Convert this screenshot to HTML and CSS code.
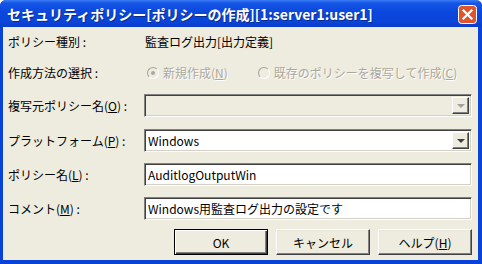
FILE: index.html
```html
<!DOCTYPE html>
<html lang="ja">
<head>
    <meta charset="UTF-8">
    <title>セキュリティポリシー</title>
    <link rel="stylesheet" href="styles.css">
</head>
<body>
    <div class="window">
        <div class="titlebar">
            <span class="title">セキュリティポリシー[ポリシーの作成][1:server1:user1]</span>
            <span class="close-btn">
                <svg width="19" height="19" viewBox="0 0 19 19">
                    <rect x="0.5" y="0.5" width="18" height="18" rx="3" fill="#e0542c" stroke="#fff"/>
                    <path d="M5.5 5.5 L13.5 13.5 M13.5 5.5 L5.5 13.5" stroke="#fff" stroke-width="2.2" stroke-linecap="square"/>
                </svg>
            </span>
        </div>

        <div class="content">
            <div class="row row-type">
                <span class="label">ポリシー種別 :</span>
                <span class="value">監査ログ出力[出力定義]</span>
            </div>

            <div class="row row-method">
                <span class="label">作成方法の選択 :</span>
                <div class="radios">
                    <span class="radio-item disabled">
                        <span class="radio checked"></span>新規作成(<u>N</u>)
                    </span>
                    <span class="radio-item disabled">
                        <span class="radio"></span>既存のポリシーを複写して作成(<u>C</u>)
                    </span>
                </div>
            </div>

            <div class="row row-source">
                <span class="label">複写元ポリシー名(<u>O</u>) :</span>
                <div class="combo disabled">
                    <span class="combo-text"></span>
                    <span class="drop-btn"><span class="arrow"></span></span>
                </div>
            </div>

            <div class="row row-platform">
                <span class="label">プラットフォーム(<u>P</u>) :</span>
                <div class="combo">
                    <span class="combo-text">Windows</span>
                    <span class="drop-btn"><span class="arrow"></span></span>
                </div>
            </div>

            <div class="row">
                <span class="label">ポリシー名(<u>L</u>) :</span>
                <div class="textbox">AuditlogOutputWin</div>
            </div>

            <div class="row">
                <span class="label">コメント(<u>M</u>) :</span>
                <div class="textbox">Windows用監査ログ出力の設定です</div>
            </div>

            <div class="buttons">
                <button class="btn default">OK</button>
                <button class="btn">キャンセル</button>
                <button class="btn">ヘルプ(<u>H</u>)</button>
            </div>
        </div>
    </div>
</body>
</html>
```

FILE: styles.css
```css
body {
    margin: 0;
    font-family: "Noto Sans CJK JP", sans-serif;
    font-size: 12px;
    color: #000;
}

.window {
    width: 482px;
    height: 264px;
    background: #0842d6;
    border-radius: 6px 6px 0 0;
    display: flex;
    flex-direction: column;
    overflow: hidden;
}

.titlebar {
    height: 27px;
    display: flex;
    align-items: center;
    justify-content: space-between;
    padding: 0 5px 0 7px;
    box-sizing: border-box;
    background: linear-gradient(#3d7cf5 0, #1556e6 3px, #0b47dc 12px, #0a44d8 22px, #0a3ccc 27px);
}

.title {
    color: #fff;
    font-size: 14px;
    font-weight: bold;
    text-shadow: 1px 1px #0a2a8a;
    white-space: nowrap;
}

.close-btn {
    display: flex;
    width: 19px;
    height: 19px;
    margin-top: 1px;
}

.content {
    flex: 1;
    margin: 0 4px 4px 3px;
    padding: 0 6px 0 5px;
    background: #eeebdf;
    display: flex;
    flex-direction: column;
}

.row {
    display: grid;
    grid-template-columns: 136px 1fr;
    align-items: center;
    height: 23px;
    margin-top: 11px;
}

.row-type {
    margin-top: 3px;
}

.row-method {
    margin-top: 8px;
}

.row-source {
    margin-top: 10px;
}

.row-platform {
    margin-top: 12px;
}

.label,
.value {
    white-space: nowrap;
}

.value {
    padding-left: 1px;
}

.radios {
    display: flex;
    padding-left: 3px;
}

.radio-item {
    display: flex;
    align-items: center;
    white-space: nowrap;
}

.radio-item + .radio-item {
    margin-left: 30px;
}

.disabled {
    color: #aca899;
    text-shadow: 1px 1px #fff;
}

.radio {
    position: relative;
    width: 10px;
    height: 10px;
    margin-right: 4px;
    border-radius: 50%;
    border: 1px solid;
    border-color: #a0a0a0 #fff #fff #a0a0a0;
    background: #eeebdf;
}

.radio.checked::after {
    content: "";
    position: absolute;
    left: 3px;
    top: 3px;
    width: 4px;
    height: 4px;
    border-radius: 50%;
    background: #aca899;
}

.combo,
.textbox {
    height: 23px;
    box-sizing: border-box;
    border: 1px solid;
    border-color: #808080 #fff #fff #808080;
    box-shadow: inset 1px 1px #404040, inset -1px -1px #d4d0c8;
    background: #fff;
}

.combo {
    display: flex;
    align-items: center;
    padding: 2px;
}

.combo.disabled {
    background: #eeebdf;
}

.combo-text {
    flex: 1;
    padding-left: 1px;
}

.drop-btn {
    width: 17px;
    height: 17px;
    box-sizing: border-box;
    display: flex;
    align-items: center;
    justify-content: center;
    background: #eeebdf;
    border: 1px solid;
    border-color: #fff #404040 #404040 #fff;
    box-shadow: inset -1px -1px #808080;
}

.arrow {
    width: 0;
    height: 0;
    border-left: 4px solid transparent;
    border-right: 4px solid transparent;
    border-top: 4px solid #404040;
}

.combo.disabled .arrow {
    border-top-color: #a0a0a0;
}

.textbox {
    padding: 0 3px;
    line-height: 21px;
    white-space: nowrap;
}

.buttons {
    display: flex;
    justify-content: flex-end;
    gap: 8px;
    margin-top: 9px;
}

.btn {
    width: 94px;
    height: 26px;
    padding: 0;
    font-family: inherit;
    font-size: 12px;
    color: #000;
    background: #eeebdf;
    border: 1px solid;
    border-color: #fff #404040 #404040 #fff;
    box-shadow: inset -1px -1px #808080, inset 1px 1px #e8e6dc;
}

.btn.default {
    border: 1px solid #000;
    box-shadow: inset 1px 1px #fff, inset -1px -1px #404040, inset -2px -2px #808080;
}
```
